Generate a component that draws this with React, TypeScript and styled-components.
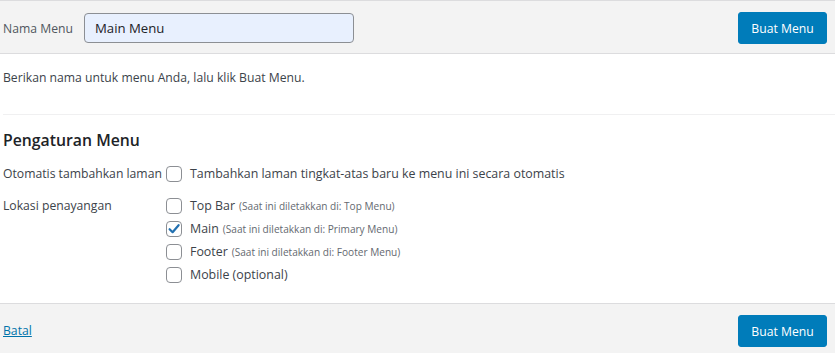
import React from "react";
import styled, { createGlobalStyle } from "styled-components";

const GlobalStyle = createGlobalStyle`
  html, body { margin: 0; padding: 0; background: #ffffff; }
  body {
    font-family: "Open Sans", "Noto Sans", Arial, sans-serif;
    font-size: 12.2px;
    color: #3c434a;
  }
  * { box-sizing: border-box; }
`;

const Page = styled.div`
  width: 835px;
  height: 353px;
  display: flex;
  flex-direction: column;
  overflow: hidden;
`;

const Bar = styled.div<{ $top?: boolean }>`
  display: flex;
  align-items: ${(p) => (p.$top ? "center" : "flex-start")};
  justify-content: space-between;
  background: #f3f3f3;
  border-top: 1px solid #dcdcde;
  border-bottom: ${(p) => (p.$top ? "1px solid #dcdcde" : "none")};
  padding: ${(p) => (p.$top ? "11px 8px 9px 3px" : "11px 8px 0 3px")};
  flex: ${(p) => (p.$top ? "0 0 auto" : "1 1 auto")};
`;

const NameGroup = styled.label`
  display: flex;
  align-items: center;
  gap: 11px;
  color: #50575e;
`;

const NameInput = styled.input`
  width: 270px;
  height: 30px;
  padding: 0 10px;
  border: 1px solid #8c8f94;
  border-radius: 4px;
  background: #e8f0fe;
  font: inherit;
  font-size: 13.2px;
  color: #1d2327;
  outline: none;
`;

const PrimaryButton = styled.button`
  height: 32px;
  width: 89px;
  padding: 0;
  border: 1px solid #007cba;
  border-radius: 3px;
  background: #007cba;
  color: #ffffff;
  font: inherit;
  font-size: 12.2px;
  cursor: pointer;
`;

const Body = styled.div`
  padding: 14px 0 17px 3px;
  background: #ffffff;
`;

const Intro = styled.p`
  margin: 0;
  line-height: 20px;
`;

const Divider = styled.hr`
  margin: 26px 0 0 0;
  border: 0;
  border-top: 1px solid #f0f0f1;
`;

const Heading = styled.h3`
  margin: 13px 0 0 0;
  font-size: 15.8px;
  line-height: 24px;
  font-weight: 600;
  color: #1d2327;
`;

const SettingRow = styled.div<{ $gap: number }>`
  display: grid;
  grid-template-columns: 163px 1fr;
  margin-top: ${(p) => p.$gap}px;
`;

const SettingLabel = styled.div`
  line-height: 23px;
  white-space: nowrap;
  color: #3c434a;
`;

const OptionList = styled.div`
  display: flex;
  flex-direction: column;
`;

const Option = styled.label`
  display: flex;
  align-items: center;
  height: 23px;
  white-space: nowrap;
  font-size: 12.4px;
  color: #3c434a;
`;

const Box = styled.span`
  flex: 0 0 auto;
  width: 16px;
  height: 16px;
  margin-right: 8px;
  border: 1px solid #8c8f94;
  border-radius: 4px;
  background: #ffffff;
  display: flex;
  align-items: center;
  justify-content: center;
`;

const Note = styled.span`
  font-size: 10.1px;
  color: #646970;
  margin-left: 4px;
`;

const CancelLink = styled.a`
  color: #0073aa;
  text-decoration: underline;
  line-height: 32px;
`;

const Check = () => (
  <svg width="14" height="14" viewBox="0 0 14 14" aria-hidden>
    <path d="M2.6 7.2 L5.6 10.2 L11.6 3.2" fill="none" stroke="#2271b1" strokeWidth="2.2" strokeLinecap="round" strokeLinejoin="round" />
  </svg>
);

const locations = [
  { name: "Top Bar", note: "(Saat ini diletakkan di: Top Menu)", checked: false },
  { name: "Main", note: "(Saat ini diletakkan di: Primary Menu)", checked: true },
  { name: "Footer", note: "(Saat ini diletakkan di: Footer Menu)", checked: false },
  { name: "Mobile (optional)", note: "", checked: false },
];

export default function App() {
  return (
    <Page>
      <GlobalStyle />
      <Bar $top>
        <NameGroup>
          Nama Menu
          <NameInput defaultValue="Main Menu" />
        </NameGroup>
        <PrimaryButton>Buat Menu</PrimaryButton>
      </Bar>
      <Body>
        <Intro>Berikan nama untuk menu Anda, lalu klik Buat Menu.</Intro>
        <Divider />
        <Heading>Pengaturan Menu</Heading>
        <SettingRow $gap={10}>
          <SettingLabel>Otomatis tambahkan laman</SettingLabel>
          <Option>
            <Box />
            Tambahkan laman tingkat-atas baru ke menu ini secara otomatis
          </Option>
        </SettingRow>
        <SettingRow $gap={9}>
          <SettingLabel>Lokasi penayangan</SettingLabel>
          <OptionList>
            {locations.map((l) => (
              <Option key={l.name}>
                <Box>{l.checked && <Check />}</Box>
                {l.name}
                {l.note && <Note>{l.note}</Note>}
              </Option>
            ))}
          </OptionList>
        </SettingRow>
      </Body>
      <Bar>
        <CancelLink href="#">Batal</CancelLink>
        <PrimaryButton>Buat Menu</PrimaryButton>
      </Bar>
    </Page>
  );
}
